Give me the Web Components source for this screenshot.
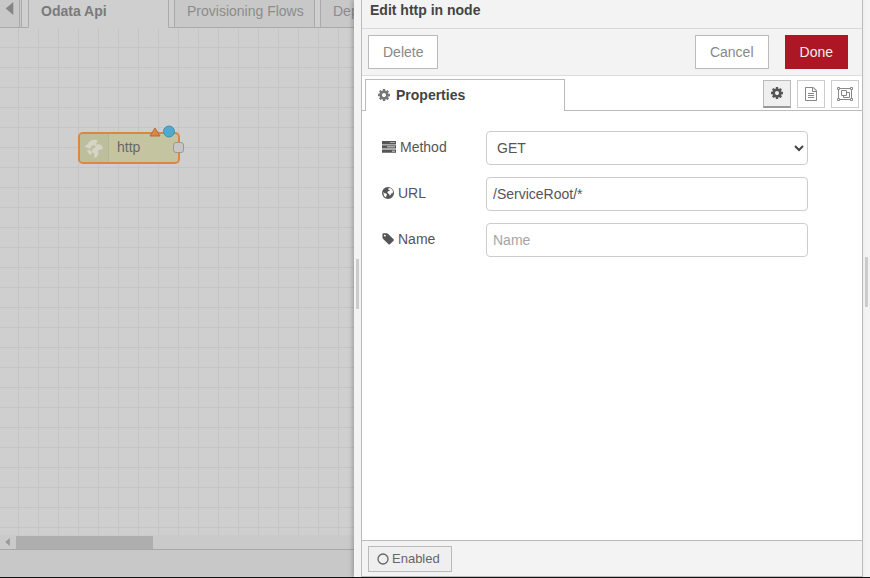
<!DOCTYPE html>
<html lang="en">
<head>
<meta charset="utf-8">
<title>Edit http in node</title>
<style>
html, body { height: 100%; margin: 0; }
body { font: 14px/20px "Liberation Sans", Arial, sans-serif; color: #555; overflow: hidden; }
</style>
</head>
<body>
<flow-editor></flow-editor>
<script>
const ICONS = {
  cog: ['128 0 1536 1792', '<path d="M1152 896q0-106-75-181t-181-75-181 75-75 181 75 181 181 75 181-75 75-181zm512-109v222q0 12-8 23t-20 13l-185 28q-19 54-39 91 35 50 107 138 10 12 10 25t-9 23q-27 37-99 108t-94 71q-12 0-26-9l-138-108q-44 23-91 38-16 136-29 186-7 28-36 28h-222q-14 0-24.500-8.500t-11.500-21.500l-28-184q-49-16-90-37l-141 107q-10 9-25 9-14 0-25-11-126-114-165-168-7-10-7-23 0-12 8-23 15-21 51-66.500t54-70.500q-27-50-41-99l-183-27q-13-2-21-12.500t-8-23.500v-222q0-12 8-23t19-13l186-28q14-46 39-92-40-57-107-138-10-12-10-24 0-10 9-23 26-36 98.500-107.500t94.500-71.500q13 0 26 10l138 107q44-23 91-38 16-136 29-186 7-28 36-28h222q14 0 24.500 8.500t11.500 21.500l28 184q49 16 90 37l142-107q9-9 24-9 13 0 25 10 129 119 165 170 7 8 7 22 0 12-8 23-15 21-51 66.500t-54 70.500q26 50 41 98l183 28q13 2 21 12.500t8 23.500z"/>', 12],
  tag: ['64 0 1600 1792', '<path d="M576 448q0-53-37.500-90.500t-90.500-37.500-90.500 37.500-37.500 90.500 37.500 90.500 90.500 37.500 90.500-37.500 37.500-90.500zm1067 576q0 53-37 90l-491 492q-39 37-91 37-53 0-90-37l-715-716q-38-37-64.500-101t-26.500-117v-416q0-52 38-90t90-38h416q53 0 117 26.500t102 64.500l715 714q37 39 37 91z"/>', 12],
  doc: ['0 0 1792 1792', '<path d="M1596 380q28 28 48 76t20 88v1152q0 40-28 68t-68 28h-1344q-40 0-68-28t-28-68v-1600q0-40 28-68t68-28h896q40 0 88 20t76 48zm-444-244v376h376q-10-29-22-41l-313-313q-12-12-41-22zm384 1528v-1024h-416q-40 0-68-28t-28-68v-416h-768v1536h1280zm-1024-864q0-14 9-23t23-9h704q14 0 23 9t9 23v64q0 14-9 23t-23 9h-704q-14 0-23-9t-9-23zm736 224q14 0 23 9t9 23v64q0 14-9 23t-23 9h-704q-14 0-23-9t-9-23v-64q0-14 9-23t23-9zm0 256q14 0 23 9t9 23v64q0 14-9 23t-23 9h-704q-14 0-23-9t-9-23v-64q0-14 9-23t23-9z"/>'],
  group: ['0 0 16 14', '<g fill="none" stroke="currentColor"><path d="M3 1.500h10M3 12.500h10M1.500 3v8M14.500 3v8M.5.5h2v2h-2zM13.500.5h2v2h-2zM.5 11.500h2v2h-2zM13.500 11.500h2v2h-2zM4.500 3.500h5v5h-5zM9.500 5.500h3v5h-6v-2"/></g>', 16],
  server: ['0 0 14 14', '<path fill-rule="evenodd" d="M0 1h14v3.400H0zM8 2.400v.7h5v-.7zM0 5.200h14v3.400H0zM5 6.600v.7h8v-.7zM0 9.400h14v3.400H0zM10 10.800v.7h3v-.7z"/>'],
  globe: ['1 1 12 14', '<path fill-rule="evenodd" d="M7 2a6 6 0 1 0 0 12A6 6 0 0 0 7 2zM7.600 3l2 .3 1.700 1.500.8 2-.6 1.500-1.300.3-.6 1.600-.9.4-.6-1.700-1.300-.6-.4-1.300 1.300-1.100 1-.2-.2-.9-1.100.1zM2.300 7l1.200 1.200 1.600.4 1 1.200-.8 1.200-.2 1.400-1.400-.8-.9-1.400z"/>', 12],
  land: ['0 0 20 20', '<path d="M5 4l3-2 4-.5 2 2-2 1.500 1 1.500-2 1.500-2-1-2 2-1 2-2-1-3-1 1-2 2-1zM12 8l2-2 3 1 2 3-2 2-1-1-2 2 .5 3-2.500 4-2-1 .5-3-2.500-2 .5-3 2-1zM3 12l3 0 2 2-1 3-2-1z"/>'],
  ring: ['0 0 12 12', '<circle cx="6" cy="6" r="5" fill="none" stroke="currentColor" stroke-width="1.300"/>', 12],
  left: ['0 0 7 12', '<path d="M7 0v12L0 6z"/>'],
  chevron: ['0 0 10 8', '<path d="M1 2l4 4 4-4" fill="none" stroke="currentColor" stroke-width="2"/>']
};
function define(name, html, setup) {
  const t = document.createElement('template');
  t.innerHTML = html;
  customElements.define(name, class extends HTMLElement {
    constructor() {
      super();
      this.attachShadow({ mode: 'open' }).append(t.content.cloneNode(true));
    }
    connectedCallback() { if (setup) setup(this); }
  });
}

define('ui-icon', `<style>
:host { display: inline-block; width: var(--w, 14px); height: 14px; flex: none; }
svg { display: block; width: 100%; height: 100%; fill: currentColor; }
</style><svg aria-hidden="true"></svg>`, el => {
  const [box, art, width] = ICONS[el.getAttribute('name')];
  const svg = el.shadowRoot.querySelector('svg');
  svg.setAttribute('viewBox', box);
  svg.innerHTML = art;
  if (width) el.style.setProperty('--w', width + 'px');
});

define('ui-button', `<style>
:host { display: block; }
button { display: flex; align-items: center; justify-content: center; gap: 3px; box-sizing: border-box; height: 34px; padding: 0 14px; border: 1px solid #bbb; background: #fff; color: #888; font: inherit; }
:host([primary]) button { border-color: #ad1625; background: #ad1625; color: #eee; }
:host([small]) button { height: 26px; padding: 0 11px 0 8px; background: #efefef; color: #666; font-size: 13px; }
:host([tool]) button { width: 28px; height: 28px; padding: 0; border-color: #ccc; }
:host([selected]) button { border-color: #bbb; border-bottom: 2px solid #999; background: #efefef; color: #555; }
</style><button type="button"><slot></slot></button>`, el => {
  if (el.title) el.shadowRoot.querySelector('button').setAttribute('aria-label', el.title);
});

define('flow-tab', `<style>
:host { display: block; flex: none; box-sizing: border-box; width: 141px; height: 28px; border: solid #aaa; border-width: 0 1px 1px; background: #c8c8c8; }
:host([active]) { border-bottom-color: #cfcfcf; background: #cfcfcf; }
button { display: block; width: 100%; height: 22px; padding: 0 12px; border: 0; background: none; color: #8c8c8c; font: inherit; text-align: left; white-space: nowrap; }
:host([active]) button { font-weight: bold; color: #7a7a7a; }
</style><button type="button"><slot></slot></button>`);

define('flow-node', `<style>
:host { position: absolute; left: 78px; top: 104px; box-sizing: border-box; display: flex; width: 102px; height: 32px; border: 2px solid #dd8544; border-radius: 5px; background: #c4c5a0; color: #686868; }
.icon { display: flex; align-items: center; justify-content: center; width: 28px; border-right: 1px solid #b5b695; background: #bcbe9c; border-radius: 3px 0 0 3px; color: #d4d5c6; }
.icon ui-icon { width: 20px; height: 20px; }
.label { padding: 3px 8px; }
.port { position: absolute; right: -6px; top: 8px; box-sizing: border-box; width: 11px; height: 11px; border: 1px solid #999; border-radius: 3px; background: #c6c6c6; }
svg { position: absolute; left: 69px; top: -9px; width: 28px; height: 13px; }
</style><div class="icon"><ui-icon name="land"></ui-icon></div><span class="label"><slot></slot></span><span class="port"></span>
<svg viewBox="0 0 28 13" aria-hidden="true"><path d="M6 3l5 8H1z" fill="#dd8544" stroke="#b36a3b"/><circle cx="20" cy="6.500" r="5.500" fill="#4eabcd" stroke="#4491ad"/></svg>`);

define('flow-workspace', `<style>
:host { display: flex; flex-direction: column; min-width: 0; overflow: hidden; background: #c8c8c8; }
.tabs { display: flex; gap: 5px; height: 28px; box-shadow: inset 0 -1px #aaa; background: #cfcfcf; }
.back { display: flex; flex: none; align-items: flex-start; box-sizing: border-box; width: 22px; height: 28px; margin-right: 1px; padding: 2px 0 0 5px; border: double #aaa; border-width: 0 3px 0 0; border-bottom: 1px solid #aaa; background: #c8c8c8; color: #858585; }
.back ui-icon { width: 9px; height: 13px; }
.canvas { position: relative; flex: 1; background: linear-gradient(90deg, #c5c5c5 1px, transparent 1px) 18px 0 / 20px 20px, linear-gradient(#c5c5c5 1px, transparent 1px) 0 19px / 20px 20px, #cfcfcf; }
.scroll { display: flex; align-items: center; gap: 6px; height: 14px; padding-left: 5px; border-bottom: 1px solid #a8a8a8; background: #cacaca; color: #999; }
.scroll ui-icon { width: 5px; height: 8px; }
.thumb { width: 137px; height: 13px; background: #aeaeae; }
.foot { height: 27px; }
</style>
<div class="tabs"><button class="back" type="button" aria-label="Scroll tabs left"><ui-icon name="left"></ui-icon></button><flow-tab active>Odata Api</flow-tab><flow-tab>Provisioning Flows</flow-tab><flow-tab>Dep</flow-tab></div>
<div class="canvas"><flow-node>http</flow-node></div>
<div class="scroll"><ui-icon name="left"></ui-icon><div class="thumb"></div></div>
<div class="foot"></div>`);

define('form-row', `<style>
:host { display: grid; grid-template-columns: 104px minmax(0, 1fr); align-items: center; }
label { display: flex; align-items: center; gap: 4px; padding-bottom: 2px; }
.field { position: relative; }
input, select { display: block; box-sizing: border-box; width: 100%; height: 34px; padding: 0 6px; border: 1px solid #ccc; border-radius: 4px; background: #fff; color: #555; font: inherit; outline: 0; }
select { padding-left: 10px; appearance: none; }
input::placeholder { color: #a5a5a5; }
.arrow { position: absolute; right: 4px; top: 13px; width: 10px; height: 8px; color: #444; pointer-events: none; }
</style><label for="f"><slot></slot></label><div class="field"></div>`, el => {
  const root = el.shadowRoot, field = root.querySelector('.field');
  root.querySelector('label').insertAdjacentHTML('afterbegin', `<ui-icon name="${el.getAttribute('icon')}"></ui-icon>`);
  if (el.hasAttribute('options')) {
    field.innerHTML = '<select id="f"></select><ui-icon class="arrow" name="chevron"></ui-icon>';
    el.getAttribute('options').split(' ').forEach(o => field.firstChild.add(new Option(o)));
  } else {
    field.innerHTML = '<input id="f" type="text">';
    field.firstChild.value = el.getAttribute('value') || '';
    field.firstChild.placeholder = el.getAttribute('placeholder') || '';
  }
});

define('drag-bar', `<style>
:host { display: flex; align-items: center; justify-content: center; box-sizing: border-box; padding-bottom: 10px; background: #f3f3f3; }
span { width: 3px; height: 50px; background: #ccc; }
</style><span></span>`);

define('edit-tray', `<style>
:host { display: grid; grid-template-columns: 7px minmax(0, 1fr); min-width: 0; box-shadow: -2px 0 4px rgba(0,0,0,.2); z-index: 1; }
.body { display: flex; flex-direction: column; border: solid #bbb; border-width: 0 1px 1px; background: #fff; }
h1 { margin: 0; height: 28px; padding-left: 8px; border-bottom: 1px solid #d8d8d8; background: #f3f3f3; color: #444; font: bold 14px/20px "Liberation Sans", Arial, sans-serif; }
.bar { display: flex; align-items: center; gap: 16px; height: 46px; padding: 0 14px 0 6px; border-bottom: 1px solid #ddd; background: #f3f3f3; }
.bar :first-child { margin-right: auto; }
.tabs { display: flex; align-items: center; gap: 6px; height: 35px; padding: 0 3px; box-shadow: inset 0 -1px #bbb; }
.tab { display: flex; align-items: center; gap: 6px; box-sizing: border-box; width: 200px; height: 32px; margin-right: auto; padding: 0 12px 2px; align-self: flex-end; border: 1px solid #bbb; border-bottom: 0; background: #fff; color: #444; font: bold 14px/20px "Liberation Sans", Arial, sans-serif; }
.tab ui-icon { color: #777; }
form { display: grid; gap: 12px; align-content: start; flex: 1; padding: 20px 54px 0 20px; }
footer { display: flex; align-items: center; height: 35px; padding: 0 6px; border-top: 1px solid #bbb; background: #f3f3f3; }
footer ui-icon { height: 12px; }
</style>
<drag-bar></drag-bar>
<div class="body">
<h1>Edit http in node</h1>
<div class="bar"><ui-button>Delete</ui-button><ui-button>Cancel</ui-button><ui-button primary>Done</ui-button></div>
<div class="tabs"><button class="tab" type="button"><ui-icon name="cog"></ui-icon>Properties</button>
<ui-button tool selected title="Properties"><ui-icon name="cog"></ui-icon></ui-button><ui-button tool title="Description"><ui-icon name="doc"></ui-icon></ui-button><ui-button tool title="Appearance"><ui-icon name="group"></ui-icon></ui-button></div>
<form><form-row icon="server" options="GET POST PUT DELETE PATCH">Method</form-row><form-row icon="globe" value="/ServiceRoot/*">URL</form-row><form-row icon="tag" placeholder="Name">Name</form-row></form>
<footer><ui-button small><ui-icon name="ring"></ui-icon>Enabled</ui-button></footer>
</div>`);

define('flow-editor', `<style>
:host { display: grid; grid-template-columns: minmax(0, 354fr) minmax(0, 509fr) 7px; box-sizing: border-box; height: 100vh; border-bottom: 1px solid #111; }
drag-bar { padding-bottom: 14px; }
</style><flow-workspace></flow-workspace><edit-tray></edit-tray><drag-bar></drag-bar>`);
</script>
</body>
</html>
